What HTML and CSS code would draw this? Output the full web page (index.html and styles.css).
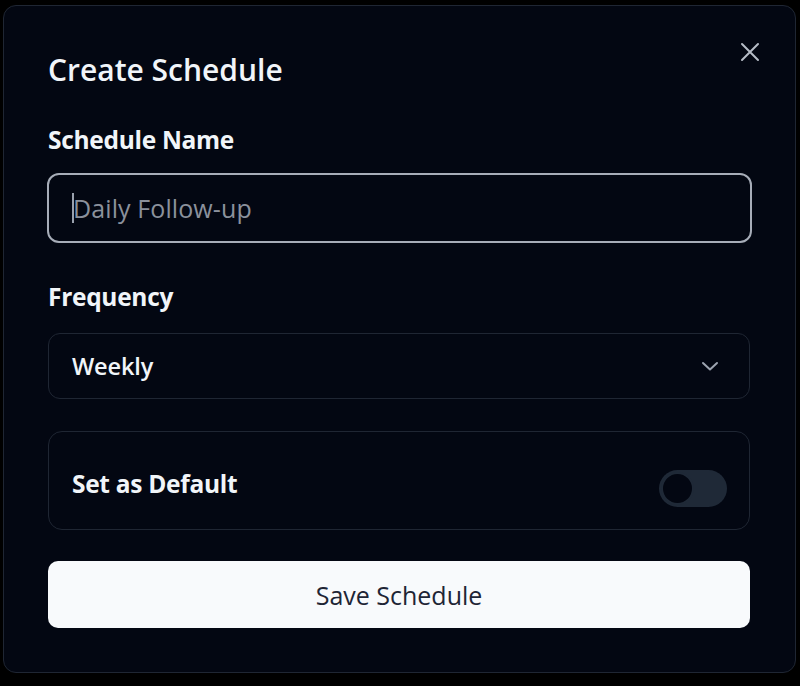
FILE: index.html
```html
<!DOCTYPE html>
<html lang="en">
<head>
<meta charset="utf-8">
<title>Create Schedule</title>
<link rel="stylesheet" href="styles.css">
</head>
<body>
<div class="dialog">
  <button class="close" aria-label="Close">
    <svg width="20" height="20" viewBox="0 0 20 20" fill="none" stroke="currentColor" stroke-width="2" stroke-linecap="round"><path d="M2 2L18 18M18 2L2 18"/></svg>
  </button>
  <h1 class="title">Create Schedule</h1>
  <label class="label label-name">Schedule Name</label>
  <div class="input focused"><span class="caret"></span><span class="placeholder">Daily Follow-up</span></div>
  <label class="label label-freq">Frequency</label>
  <div class="select">
    <span class="select-value">Weekly</span>
    <svg class="chevron" width="18" height="10" viewBox="0 0 18 10" fill="none" stroke="currentColor" stroke-width="2" stroke-linecap="round" stroke-linejoin="round"><path d="M2 2L9 8.5L16 2"/></svg>
  </div>
  <div class="default-box">
    <span class="default-label">Set as Default</span>
    <span class="switch"><span class="thumb"></span></span>
  </div>
  <button class="save">Save Schedule</button>
</div>
</body>
</html>
```
FILE: styles.css
```css
* { box-sizing: border-box; }
html, body { margin: 0; padding: 0; }
body {
  background: #000;
  font-family: "Open Sans", "Noto Sans", sans-serif;
  width: 800px;
  height: 686px;
  overflow: hidden;
  padding-top: 5px;
}
.dialog {
  position: relative;
  margin: 0 4px 0 3px;
  height: 668px;
  background: #030712;
  border: 1px solid #1f2633;
  border-radius: 13px;
  padding: 44px 45px 0 44px;
  display: flex;
  flex-direction: column;
}
.close {
  position: absolute;
  top: 36px;
  right: 35px;
  background: none;
  border: none;
  padding: 0;
  color: #b6bcc6;
  display: flex;
}
.title {
  margin: 0;
  font-size: 30px;
  font-weight: 600;
  color: #f1f5f9;
  line-height: 40px;
  letter-spacing: 0;
}
.label {
  font-size: 24.5px;
  font-weight: 700;
  color: #f1f5f9;
  line-height: 30px;
  letter-spacing: -0.3px;
}
.label-name { margin-top: 35px; }
.label-freq { margin-top: 39px; }
.input {
  margin: 18px -2px 0 -1px;
  height: 70px;
  border: 2px solid #a7adb8;
  border-radius: 12px;
  display: flex;
  align-items: center;
  padding-left: 23px;
}
.caret {
  width: 2px;
  height: 30px;
  background: #9aa1ad;
}
.placeholder {
  font-size: 25px;
  color: #8b919c;
  margin-left: -1px;
  letter-spacing: 0.1px;
}
.select {
  margin-top: 21px;
  height: 66px;
  border: 1px solid #1f2633;
  border-radius: 12px;
  display: flex;
  align-items: center;
  justify-content: space-between;
  padding: 0 30px 0 23px;
}
.select-value {
  font-size: 23.5px;
  font-weight: 600;
  color: #f1f5f9;
  letter-spacing: -0.1px;
}
.chevron { color: #9ca3af; }
.default-box {
  margin-top: 32px;
  height: 99px;
  border: 1px solid #1f2633;
  border-radius: 14px;
  display: flex;
  align-items: center;
  justify-content: space-between;
  padding: 0 22px 0 23px;
}
.default-label {
  font-size: 24.5px;
  font-weight: 700;
  color: #f1f5f9;
  letter-spacing: -0.3px;
  margin-top: 6px;
}
.switch {
  width: 68px;
  height: 37px;
  border-radius: 19px;
  background: #1f2937;
  display: flex;
  align-items: center;
  padding: 2px;
  margin-top: 15px;
}
.thumb {
  width: 33px;
  height: 33px;
  border-radius: 50%;
  background: #030712;
  border: 2px solid #1f2937;
}
.save {
  margin-top: 31px;
  height: 67px;
  border: none;
  border-radius: 10px;
  background: #f8fafc;
  color: #1e2535;
  font-family: inherit;
  font-size: 25px;
  font-weight: 500;
}
```
